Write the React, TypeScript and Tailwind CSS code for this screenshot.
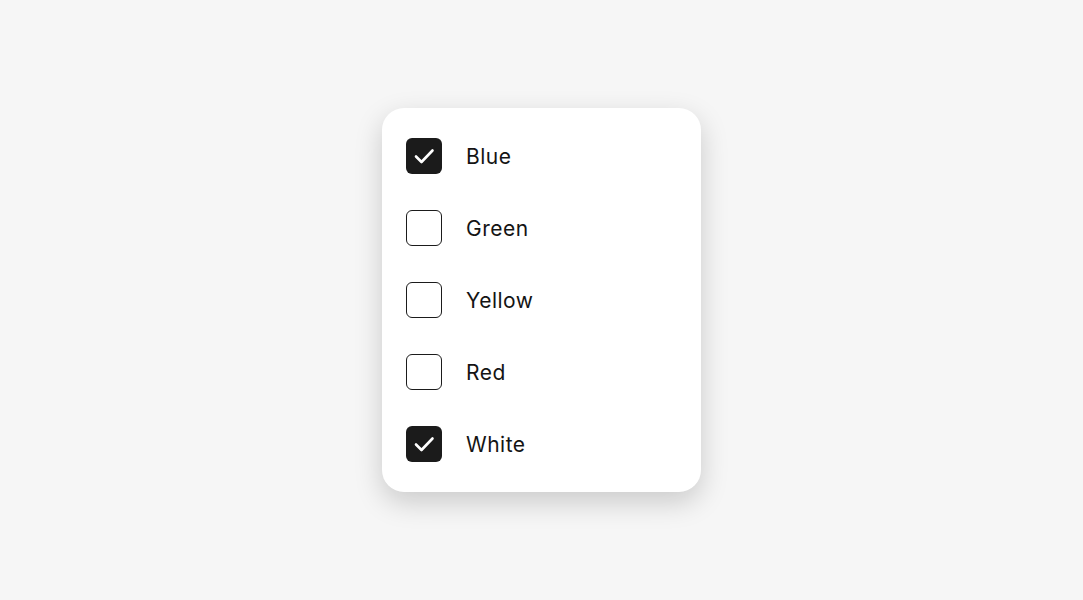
import React, { useState } from "react";

const colors = [
  { name: "Blue", checked: true },
  { name: "Green", checked: false },
  { name: "Yellow", checked: false },
  { name: "Red", checked: false },
  { name: "White", checked: true },
];

const Box = ({ checked }: { checked: boolean }) =>
  checked ? (
    <span className="flex h-9 w-9 items-center justify-center rounded-[6px] bg-[#1b1b1b]">
      <svg width="36" height="36" viewBox="0 0 36 36" fill="none">
        <path
          d="M10 18.5 L15.5 24 L26.5 12.5"
          stroke="#fff"
          strokeWidth="2.6"
          strokeLinecap="round"
          strokeLinejoin="round"
        />
      </svg>
    </span>
  ) : (
    <span className="h-9 w-9 rounded-[6px] border-[1.5px] border-[#1b1b1b] bg-white" />
  );

export default function App() {
  const [items, setItems] = useState(colors);

  return (
    <div className="flex h-[600px] w-full items-center justify-center bg-[#f6f6f6] font-['Inter',sans-serif]">
      <div className="flex w-[319px] flex-col gap-9 rounded-[22px] bg-white px-6 py-[30px] shadow-[0_10px_28px_rgba(0,0,0,0.18)]">
        {items.map((c, i) => (
          <label
            key={c.name}
            className="flex h-9 cursor-pointer items-center gap-6"
            onClick={() =>
              setItems(items.map((x, j) => (j === i ? { ...x, checked: !x.checked } : x)))
            }
          >
            <Box checked={c.checked} />
            <span className="pt-0.5 text-[21px] tracking-[0.5px] text-[#141414]">{c.name}</span>
          </label>
        ))}
      </div>
    </div>
  );
}
